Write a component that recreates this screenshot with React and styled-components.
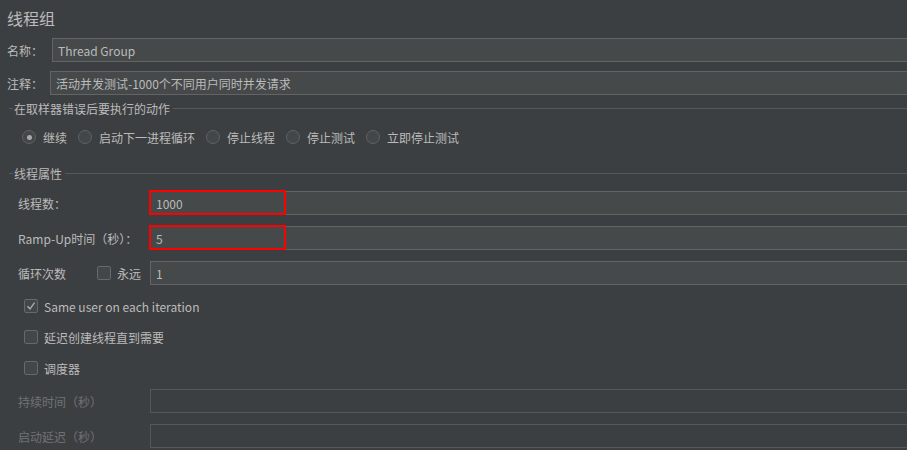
import React from "react";
import styled, { createGlobalStyle } from "styled-components";

const GlobalStyle = createGlobalStyle`
  html, body {
    margin: 0;
    padding: 0;
    background: #3c3f41;
    overflow: hidden;
  }
  body {
    font-family: "Noto Sans CJK SC", "Noto Sans", sans-serif;
    font-size: 12px;
    color: #bbbbbb;
  }
`;

const Page = styled.div`
  width: 930px;
  height: 450px;
  padding: 7px 0 0 7px;
  box-sizing: border-box;
  display: flex;
  flex-direction: column;
`;

const Title = styled.div`
  font-size: 16px;
  line-height: 22px;
  height: 22px;
`;

const FieldRow = styled.div`
  display: flex;
  align-items: center;
  height: 24px;
  margin-top: ${(p) => p.$top || 0}px;
`;

const Label = styled.span`
  flex: none;
  width: ${(p) => (p.$width ? `${p.$width}px` : "auto")};
  margin-right: ${(p) => p.$gap || 0}px;
  color: ${(p) => (p.$disabled ? "#707274" : "#bbbbbb")};
  white-space: nowrap;
`;

const Field = styled.div`
  position: relative;
  flex: 1;
  height: 24px;
  display: flex;
`;

const Input = styled.input`
  flex: 1;
  height: 24px;
  box-sizing: border-box;
  padding: 0 5px;
  border: 1px solid ${(p) => (p.disabled ? "#55585a" : "#646464")};
  background: ${(p) => (p.disabled ? "#3c3f41" : "#45494a")};
  color: #bbbbbb;
  font: inherit;
  outline: none;
`;

/* red marker drawn over the key fields */
const Highlight = styled.div`
  position: absolute;
  left: -1px;
  top: -1px;
  width: 137px;
  height: 25px;
  box-sizing: border-box;
  border: 2px solid #ff0000;
  pointer-events: none;
`;

const GroupTitle = styled.div`
  display: flex;
  align-items: center;
  height: 16px;
  margin-top: ${(p) => p.$top || 0}px;
  padding-left: 2px;

  &::before {
    content: "";
    width: 4px;
    height: 1px;
    background: #55595b;
    margin-right: 1px;
  }
  &::after {
    content: "";
    flex: 1;
    height: 1px;
    background: #55595b;
    margin-left: 3px;
  }
`;

const RadioRow = styled.div`
  display: flex;
  align-items: center;
  height: 20px;
  margin-top: 11px;
  padding-left: 15px;
`;

const RadioOption = styled.label`
  display: flex;
  align-items: center;
  margin-right: 11px;
  white-space: nowrap;
`;

const RadioCircle = styled.span`
  width: 14px;
  height: 14px;
  box-sizing: border-box;
  border-radius: 50%;
  border: 1px solid #5f6365;
  background: #43474a;
  display: flex;
  align-items: center;
  justify-content: center;
  margin-right: 7px;

  &::after {
    content: "";
    display: ${(p) => (p.$checked ? "block" : "none")};
    width: 5px;
    height: 5px;
    border-radius: 50%;
    background: #a9a9a9;
  }
`;

const Section = styled.div`
  display: flex;
  flex-direction: column;
  gap: 11px;
  margin-top: 10px;
  padding-left: 11px;
`;

const CheckRow = styled.label`
  display: flex;
  align-items: center;
  height: 20px;
  padding-left: ${(p) => (p.$inline ? 0 : 6)}px;
  margin-right: ${(p) => (p.$inline ? 9 : 0)}px;
  white-space: nowrap;
`;

const Box = styled.span`
  width: 14px;
  height: 14px;
  box-sizing: border-box;
  border: 1px solid #65696b;
  border-radius: 2px;
  background: #43474a;
  margin-right: 6px;
  display: flex;
  align-items: center;
  justify-content: center;
`;

const Check = ({ checked }) => (
  <Box>
    {checked && (
      <svg width="10" height="10" viewBox="0 0 10 10">
        <polyline
          points="1.5,5.2 4,7.8 8.6,1.6"
          fill="none"
          stroke="#a9a9a9"
          strokeWidth="1.4"
        />
      </svg>
    )}
  </Box>
);

const actions = ["继续", "启动下一进程循环", "停止线程", "停止测试", "立即停止测试"];

export default function App() {
  return (
    <>
      <GlobalStyle />
      <Page>
        <Title>线程组</Title>

        <FieldRow $top={9}>
          <Label $gap={9}>名称：</Label>
          <Field>
            <Input defaultValue="Thread Group" />
          </Field>
        </FieldRow>
        <FieldRow $top={9}>
          <Label $gap={7}>注释：</Label>
          <Field>
            <Input defaultValue="活动并发测试-1000个不同用户同时并发请求" />
          </Field>
        </FieldRow>

        <GroupTitle $top={5}>在取样器错误后要执行的动作</GroupTitle>
        <RadioRow>
          {actions.map((a, i) => (
            <RadioOption key={a}>
              <RadioCircle $checked={i === 0} />
              {a}
            </RadioOption>
          ))}
        </RadioRow>

        <GroupTitle $top={18}>线程属性</GroupTitle>
        <Section>
          <FieldRow>
            <Label $width={132}>线程数：</Label>
            <Field>
              <Input defaultValue="1000" />
              <Highlight />
            </Field>
          </FieldRow>
          <FieldRow>
            <Label $width={132}>Ramp-Up时间（秒）：</Label>
            <Field>
              <Input defaultValue="5" />
              <Highlight />
            </Field>
          </FieldRow>
          <FieldRow>
            <Label $width={79}>循环次数</Label>
            <CheckRow $inline>
              <Check />
              永远
            </CheckRow>
            <Field>
              <Input defaultValue="1" />
            </Field>
          </FieldRow>
          <CheckRow>
            <Check checked />
            Same user on each iteration
          </CheckRow>
          <CheckRow>
            <Check />
            延迟创建线程直到需要
          </CheckRow>
          <CheckRow>
            <Check />
            调度器
          </CheckRow>
          <FieldRow>
            <Label $width={132} $disabled>
              持续时间（秒）
            </Label>
            <Field>
              <Input disabled defaultValue="" />
            </Field>
          </FieldRow>
          <FieldRow>
            <Label $width={132} $disabled>
              启动延迟（秒）
            </Label>
            <Field>
              <Input disabled defaultValue="" />
            </Field>
          </FieldRow>
        </Section>
      </Page>
    </>
  );
}
